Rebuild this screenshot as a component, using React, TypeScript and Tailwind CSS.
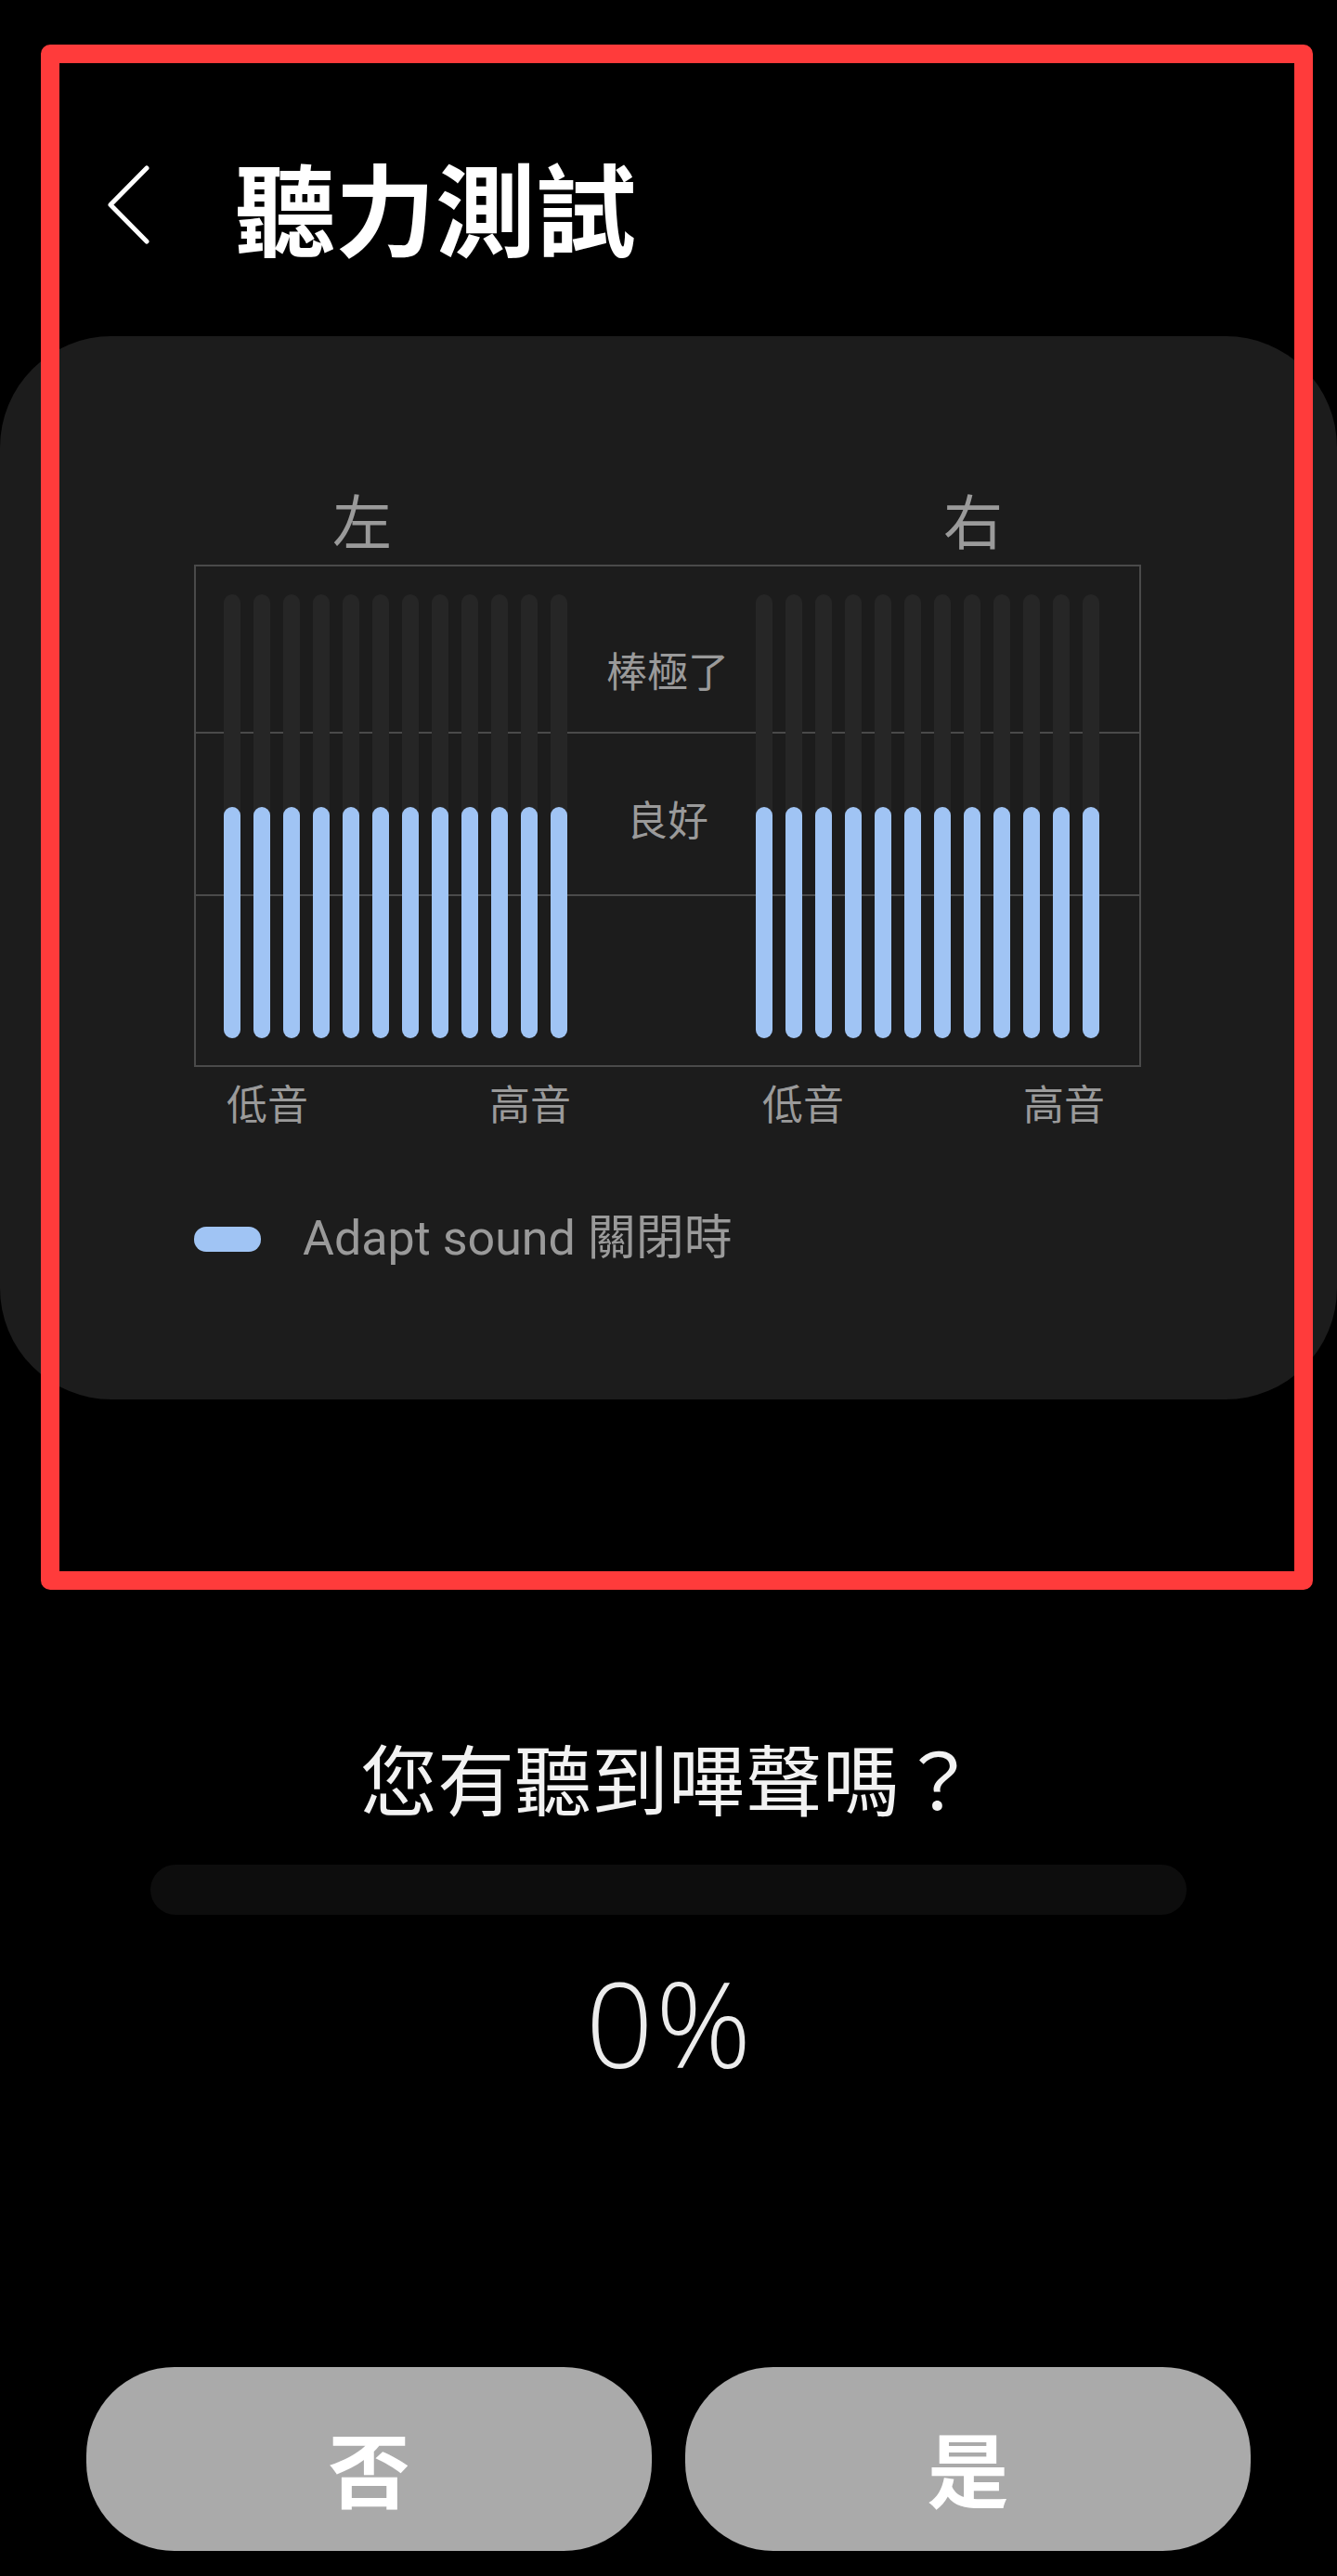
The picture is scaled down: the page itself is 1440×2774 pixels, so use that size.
const cjk = "font-['Noto_Sans_CJK_TC','Noto_Sans_CJK_SC',sans-serif]";

const levels = Array.from({ length: 12 }, () => 249);

function BarGroup({ values }: { values: number[] }) {
  return (
    <div className="flex gap-[14px]">
      {values.map((v, i) => (
        <div key={i} className="relative h-[478px] w-[18px] rounded-full bg-[#262626]">
          <div
            className="absolute bottom-0 left-0 w-full rounded-full bg-[#a0c4f4]"
            style={{ height: v }}
          />
        </div>
      ))}
    </div>
  );
}

export default function App() {
  return (
    <div className={`relative h-[2774px] w-[1440px] overflow-hidden bg-black ${cjk}`}>
      {/* Header */}
      <div className="flex h-[108px] items-center pl-[115px] mt-[167px]">
        <svg width="48" height="88" viewBox="0 0 48 88" fill="none">
          <path
            d="M43 4 L4 43.5 L43 83"
            stroke="white"
            strokeWidth="5"
            strokeLinecap="round"
            strokeLinejoin="round"
          />
        </svg>
        <h1 className="ml-[90px] text-[108px] font-bold leading-none text-white">聽力測試</h1>
      </div>

      {/* Chart card */}
      <div className="mt-[87px] h-[1145px] w-full rounded-[120px] bg-[#1c1c1c] pt-[164px]">
        <div className="ml-[209px] flex w-[1020px] justify-between px-[149px] text-[64px] leading-none text-[#9a9a9a]">
          <span className="w-[64px] text-center">左</span>
          <span className="w-[64px] text-center">右</span>
        </div>

        <div className="relative ml-[209px] mt-[18px] h-[541px] w-[1020px] border-2 border-[#4a4a4a]">
          <div className="absolute left-0 right-0 top-[178px] h-[2px] bg-[#4a4a4a]" />
          <div className="absolute left-0 right-0 top-[353px] h-[2px] bg-[#4a4a4a]" />
          <div className="relative flex pl-[30px] pt-[30px]">
            <BarGroup values={levels} />
            <div className="ml-[203px]">
              <BarGroup values={levels} />
            </div>
          </div>
          <div className="absolute left-0 right-0 top-[89px] text-center text-[44px] leading-none text-[#9a9a9a]">
            棒極了
          </div>
          <div className="absolute left-0 right-0 top-[249px] text-center text-[44px] leading-none text-[#9a9a9a]">
            良好
          </div>
        </div>

        <div className="mt-[16px] flex pl-[244px] text-[44px] leading-none text-[#9a9a9a]">
          <span>低音</span>
          <span className="ml-[195px]">高音</span>
          <span className="ml-[206px]">低音</span>
          <span className="ml-[193px]">高音</span>
        </div>

        <div className="mt-[99px] flex items-center gap-[45px] pl-[209px]">
          <div className="h-[27px] w-[72px] rounded-[13px] bg-[#a0c4f4]" />
          <span className="font-['Roboto','Noto_Sans_CJK_TC',sans-serif] text-[52px] leading-none text-[#9a9a9a]">
            Adapt sound 關閉時
          </span>
        </div>
      </div>

      {/* Question + progress */}
      <div className="mt-[365px] flex flex-col items-center">
        <p className="text-[83px] leading-none text-[#f2f2f2]">您有聽到嗶聲嗎？</p>
        <div className="mt-[53px] h-[54px] w-[1116px] rounded-full bg-[#0d0d0d]" />
        <p className="mt-[52px] pl-[2px] font-['Open_Sans',sans-serif] text-[128px] font-light leading-none tracking-[2px] text-[#ececec]">
          0%
        </p>
      </div>

      {/* Buttons */}
      <div className="mt-[307px] flex justify-center gap-[36px]">
        <button className="flex h-[198px] w-[609px] items-center justify-center rounded-[95px] bg-[#aaaaaa] pt-[16px] text-[88px] font-bold leading-none text-white">
          否
        </button>
        <button className="flex h-[198px] w-[609px] items-center justify-center rounded-[95px] bg-[#aaaaaa] pt-[16px] text-[88px] font-bold leading-none text-white">
          是
        </button>
      </div>

      {/* Annotation frame */}
      <div className="pointer-events-none absolute left-[44px] top-[48px] h-[1664px] w-[1370px] rounded-[10px] border-[20px] border-[#ff3b3b]" />
    </div>
  );
}
